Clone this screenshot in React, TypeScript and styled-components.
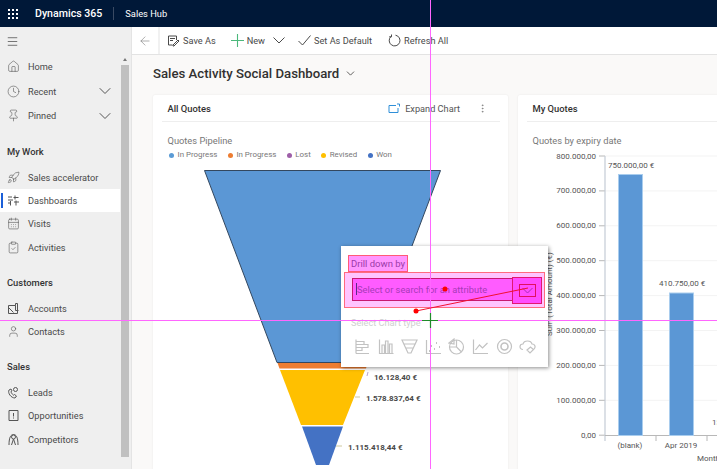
import React from "react";
import styled, { createGlobalStyle } from "styled-components";
import {
  ArrowLeft,
  ChevronDown,
  Clock,
  Home,
  Menu,
  MoreVertical,
  Pin,
  Rocket,
  CalendarDays,
  ClipboardCheck,
  User,
} from "lucide-react";

const GlobalStyle = createGlobalStyle`
  html, body {
    margin: 0;
    padding: 0;
    width: 717px;
    height: 469px;
    overflow: hidden;
    background: #faf9f8;
  }
  * { box-sizing: border-box; }
  body { font-family: Roboto, "Open Sans", sans-serif; }
`;

const Page = styled.div`
  position: relative;
  width: 717px;
  height: 469px;
  overflow: hidden;
  display: flex;
  flex-direction: column;
`;

const TopBar = styled.header`
  flex: 0 0 27px;
  background: #001838;
  color: #fff;
  display: flex;
  align-items: center;
  padding-left: 8px;
`;

const Waffle = styled.div`
  display: grid;
  grid-template-columns: repeat(3, 2px);
  grid-auto-rows: 2px;
  gap: 2px;
  margin-right: 17px;
  span {
    background: #fff;
  }
`;

const Product = styled.div`
  font-size: 10.6px;
  font-weight: 500;
  padding-right: 11px;
  border-right: 1px solid #3a4a63;
  line-height: 13px;
`;

const App_ = styled.div`
  font-size: 9.3px;
  padding-left: 11px;
`;

const Body = styled.div`
  flex: 1;
  display: flex;
  min-height: 0;
`;

const Side = styled.aside`
  flex: 0 0 132px;
  background: #efefef;
  display: flex;
  border-right: 1px solid #e4e4e4;
`;

const Nav = styled.nav`
  flex: 0 0 120px;
  padding-top: 5px;
  display: flex;
  flex-direction: column;
`;

const Burger = styled.div`
  height: 18px;
  padding-left: 6px;
  margin-bottom: 4.5px;
  display: flex;
  align-items: center;
  color: #333;
`;

const NavItem = styled.div<{ $active?: boolean; $tall?: boolean }>`
  position: relative;
  height: ${(p) => (p.$tall ? 24.5 : 23.2)}px;
  display: flex;
  align-items: center;
  gap: 8px;
  padding: 0 5px 0 7px;
  font-size: 9.2px;
  color: #4a4a4a;
  background: ${(p) => (p.$active ? "#fff" : "transparent")};
  svg {
    flex: none;
    color: #555;
  }
  ${(p) =>
    p.$active &&
    `&::before {
      content: "";
      position: absolute;
      left: 1px;
      top: 4px;
      bottom: 4px;
      width: 2px;
      background: #1b5fd8;
    }`}
`;

const NavLabel = styled.span`
  flex: 1;
`;

const NavGroup = styled.div`
  font-size: 9.4px;
  font-weight: 500;
  color: #333;
  padding-left: 7px;
  height: 26px;
  margin: 10.5px 0 1.5px;
  display: flex;
  align-items: center;
`;

const Scroll = styled.div`
  flex: 0 0 8px;
  margin-left: 1px;
  display: flex;
  flex-direction: column;
  align-items: center;
  padding-top: 31px;
`;

const ScrollUp = styled.div`
  width: 0;
  height: 0;
  border-left: 2.5px solid transparent;
  border-right: 2.5px solid transparent;
  border-bottom: 3px solid #777;
  margin-bottom: 4px;
`;

const ScrollThumb = styled.div`
  width: 8px;
  height: 392px;
  background: #c0c0c0;
`;

const Main = styled.main`
  flex: 1;
  min-width: 0;
  display: flex;
  flex-direction: column;
`;

const CommandRow = styled.div`
  flex: 0 0 28px;
  display: flex;
  gap: 2px;
  border-bottom: 1px solid #e3e3e3;
  background: #f1f1f1;
`;

const BackBox = styled.div`
  flex: 0 0 26px;
  background: #fff;
  display: flex;
  align-items: center;
  justify-content: center;
  color: #777;
`;

const Toolbar = styled.div`
  flex: 1;
  background: #fff;
  display: flex;
  align-items: center;
  padding-left: 7px;
  font-size: 9.2px;
  color: #4a4a4a;
`;

const Cmd = styled.div<{ $gap: number }>`
  display: flex;
  align-items: center;
  gap: 3px;
  margin-right: ${(p) => p.$gap}px;
  svg {
    flex: none;
  }
`;

const Content = styled.div`
  flex: 1;
  padding: 8px 0 0 21px;
  min-height: 0;
  overflow: hidden;
`;

const Heading = styled.h1`
  margin: 0 0 12px;
  height: 20px;
  font-size: 13.2px;
  font-weight: 500;
  color: #323130;
  display: flex;
  align-items: center;
  gap: 5px;
`;

const Cards = styled.div`
  display: flex;
  gap: 10px;
`;

const Card = styled.section<{ $width: number }>`
  flex: 0 0 ${(p) => p.$width}px;
  height: 380px;
  background: #fff;
  border-radius: 2px;
  box-shadow: 0 0 2px rgba(0, 0, 0, 0.08);
  overflow: hidden;
`;

const CardHead = styled.div`
  margin: 0 8px 0 9px;
  height: 27px;
  padding: 0 12px 0 5.5px;
  border-bottom: 1px solid #eee;
  display: flex;
  align-items: center;
  font-size: 9.4px;
  color: #323130;
`;

const CardTitle = styled.div`
  font-weight: 500;
  flex: 1;
`;

const Expand = styled.div`
  display: flex;
  align-items: center;
  gap: 5px;
  margin-right: 17px;
  font-size: 9.2px;
  color: #555;
`;

const ChartTitle = styled.div`
  font-size: 9.3px;
  color: #777;
  padding: 12px 0 0 14.5px;
  line-height: 13px;
`;

const Legend = styled.div`
  display: flex;
  gap: 10.5px;
  padding: 2px 0 0 16px;
  font-size: 7.9px;
  line-height: 12px;
  color: #777;
`;

const LegendItem = styled.div<{ $color: string }>`
  display: flex;
  align-items: center;
  gap: 3.5px;
  &::before {
    content: "";
    width: 5px;
    height: 5px;
    border-radius: 50%;
    background: ${(p) => p.$color};
  }
`;

const ChartSvg = styled.svg<{ $top: number }>`
  display: block;
  margin-top: ${(p) => p.$top}px;
  font-family: Roboto, sans-serif;
`;

const Popup = styled.div`
  position: absolute;
  left: 341px;
  top: 246px;
  width: 207px;
  height: 121px;
  background: #fff;
  box-shadow: 1px 1px 4px rgba(0, 0, 0, 0.45);
  padding: 9px 3px 0;
  display: flex;
  flex-direction: column;
`;

const DrillLabel = styled.div`
  align-self: flex-start;
  margin-left: 4px;
  width: 60px;
  height: 17px;
  padding-left: 2px;
  background: #ff96ff;
  border: 1px solid #ff5a78;
  font-size: 9.5px;
  line-height: 15px;
  color: #9a3aa8;
  white-space: nowrap;
`;

const FieldHalo = styled.div`
  position: relative;
  width: 201px;
  height: 36px;
  background: #ffc4ff;
  border: 1px solid #ff6a80;
  padding: 5px 0 0 7px;
`;

const Field = styled.div`
  width: 185px;
  height: 23px;
  background: #ff5cff;
  border: 1px solid #c81870;
  padding-left: 3px;
  font-size: 9.3px;
  line-height: 21px;
  color: #a83ab8;
  white-space: nowrap;
  overflow: hidden;
`;

const Caret = styled.span`
  display: inline-block;
  width: 1px;
  height: 12px;
  vertical-align: -2px;
  background: #5a2a8a;
`;

const DropHalo = styled.div`
  position: absolute;
  left: 167px;
  top: 4px;
  width: 30px;
  height: 27px;
  background: #ff4cff;
  border: 1px solid #e01870;
  display: flex;
  align-items: center;
  justify-content: center;
`;

const DropInner = styled.div`
  width: 17px;
  height: 13px;
  border: 1px solid #e01060;
  display: flex;
  align-items: center;
  justify-content: center;
  color: #a82cb8;
`;

const ChartTypeLabel = styled.div`
  font-size: 9.2px;
  color: #cfcfcf;
  padding: 8px 0 0 7px;
  line-height: 13px;
`;

const ChartTypes = styled.div`
  display: flex;
  gap: 6.6px;
  padding: 9px 0 0 10px;
  color: #c2c2c2;
`;

const Annotations = styled.svg`
  position: absolute;
  left: 0;
  top: 0;
  pointer-events: none;
`;

type IconProps = { children: React.ReactNode };

const Ico = ({ children }: IconProps) => (
  <svg width="13" height="13" viewBox="0 0 13 13" fill="none" stroke="currentColor" strokeWidth="1">
    {children}
  </svg>
);

const ChartIco = ({ children }: IconProps) => (
  <svg width="17" height="17" viewBox="0 0 17 17" fill="none" stroke="currentColor" strokeWidth="1.2">
    {children}
  </svg>
);

const small = { size: 13, strokeWidth: 1.1 };

const sections = [
  {
    title: "My Work",
    items: [
      { label: "Sales accelerator", icon: <Rocket {...small} /> },
      {
        label: "Dashboards",
        active: true,
        icon: (
          <Ico>
            <path d="M1 3h4M1 6h5M1 9h3M8 1.500v4M6.500 3.500h5M7 8h5M9 6.500v5M3.500 7v4.500" />
          </Ico>
        ),
      },
      { label: "Visits", icon: <CalendarDays {...small} /> },
      { label: "Activities", icon: <ClipboardCheck {...small} /> },
    ],
  },
  {
    title: "Customers",
    items: [
      {
        label: "Accounts",
        icon: (
          <Ico>
            <path d="M1.500 11.500v-8h7v-2h2v10zM1.500 5.500l5 5M8.500 3.500v5h3" />
          </Ico>
        ),
      },
      { label: "Contacts", icon: <User {...small} /> },
    ],
  },
  {
    title: "Sales",
    items: [
      {
        label: "Leads",
        icon: (
          <Ico>
            <circle cx="8.500" cy="3.500" r="2" />
            <path d="M2 4c-1.500 3 2 8 6 8l1.500-2-2-1.500-1 .7C5 8 4 6.500 4 5.500l1-.7L4 3z" />
          </Ico>
        ),
      },
      {
        label: "Opportunities",
        icon: (
          <Ico>
            <path d="M2 1.500h9v10H2zM6.500 4v3.500M6.500 8.500v1" />
          </Ico>
        ),
      },
      {
        label: "Competitors",
        icon: (
          <Ico>
            <circle cx="6.500" cy="4" r="2" />
            <path d="M2 12c0-8 2-10.500 4.500-10.500S11 4 11 12M4.500 12l2-6 2 6" />
          </Ico>
        ),
      },
    ],
  },
];

const legend = [
  { label: "In Progress", color: "#5b9bd5" },
  { label: "In Progress", color: "#ed7d31" },
  { label: "Lost", color: "#9e5fa8" },
  { label: "Revised", color: "#ffc000" },
  { label: "Won", color: "#4472c4" },
];

const yTicks = [
  "800.000,00",
  "700.000,00",
  "600.000,00",
  "500.000,00",
  "400.000,00",
  "300.000,00",
  "200.000,00",
  "100.000,00",
  "0,00",
];

const FunnelChart = () => (
  <ChartSvg $top={4} width="355" height="304" viewBox="153 165 355 304">
    <polygon points="204.500,170.500 440.500,170.500 368,362.500 277,362.500" fill="#5b97d5" stroke="#33475f" strokeWidth="1" />
    <polygon points="277.500,363 367.500,363 366,368.500 279.500,368.500" fill="#ed7d31" />
    <polygon points="280,370 365,370 343,425 301,425" fill="#ffc000" />
    <polygon points="302,426.500 343,426.500 329,465 316,465" fill="#4472c4" />
    <path d="M368 372l-1 4" stroke="#b9a3cc" fill="none" />
    <path d="M355 397h5M336 446h6" stroke="#cfc9a0" fill="none" />
    <g fontSize="8" fontWeight="700" fill="#484848">
      <text x="374" y="380">16.128,40 €</text>
      <text x="366" y="401">1.578.837,64 €</text>
      <text x="348" y="450">1.115.418,44 €</text>
    </g>
  </ChartSvg>
);

const BarChart = () => (
  <ChartSvg $top={3} width="260" height="320" viewBox="518 150 260 320">
    {yTicks.map((tick, i) => {
      const y = 156 + i * 34.9;
      return (
        <g key={tick}>
          {i < 8 && <line x1="605" x2="780" y1={y} y2={y} stroke="#f3f3f3" />}
          <line x1="599" x2="605" y1={y} y2={y} stroke="#b8b8b8" />
          <text x="596" y={y + 2.5} fontSize="8" fill="#555" textAnchor="end">
            {tick}
          </text>
        </g>
      );
    })}
    <line x1="605" x2="605" y1="156" y2="441" stroke="#c4cbd6" strokeWidth="1.200" />
    <line x1="605" x2="780" y1="435.500" y2="435.500" stroke="#b8b8b8" />
    <line x1="656" x2="656" y1="435" y2="441" stroke="#b8b8b8" />
    <line x1="707" x2="707" y1="435" y2="441" stroke="#b8b8b8" />
    <rect x="618.500" y="174.500" width="24" height="261" fill="#5b97d5" stroke="#a9cdee" />
    <rect x="669.500" y="293" width="24" height="142.500" fill="#5b97d5" stroke="#a9cdee" />
    <g fontSize="8" fill="#555">
      <text x="608" y="168">750.000,00 €</text>
      <text x="659" y="286">410.750,00 €</text>
      <text x="712" y="425">13</text>
      <text x="630" y="448" textAnchor="middle">(blank)</text>
      <text x="681" y="448" textAnchor="middle">Apr 2019</text>
      <text x="697" y="461">Month</text>
      <text transform="translate(552 336) rotate(-90)">Sum (Total Amount) (€)</text>
    </g>
  </ChartSvg>
);

export default function App() {
  return (
    <Page>
      <GlobalStyle />
      <TopBar>
        <Waffle>
          {Array.from({ length: 9 }, (_, i) => (
            <span key={i} />
          ))}
        </Waffle>
        <Product>Dynamics 365</Product>
        <App_>Sales Hub</App_>
      </TopBar>
      <Body>
        <Side>
          <Nav>
            <Burger>
              <Menu size={13} strokeWidth={1.2} />
            </Burger>
            <NavItem $tall>
              <Home {...small} />
              <NavLabel>Home</NavLabel>
            </NavItem>
            <NavItem $tall>
              <Clock {...small} />
              <NavLabel>Recent</NavLabel>
              <ChevronDown size={20} strokeWidth={1.2} />
            </NavItem>
            <NavItem $tall>
              <Pin {...small} />
              <NavLabel>Pinned</NavLabel>
              <ChevronDown size={20} strokeWidth={1.2} />
            </NavItem>
            {sections.map((section) => (
              <React.Fragment key={section.title}>
                <NavGroup>{section.title}</NavGroup>
                {section.items.map((item) => (
                  <NavItem key={item.label} $active={item.active}>
                    {item.icon}
                    <NavLabel>{item.label}</NavLabel>
                  </NavItem>
                ))}
              </React.Fragment>
            ))}
          </Nav>
          <Scroll>
            <ScrollUp />
            <ScrollThumb />
          </Scroll>
        </Side>
        <Main>
          <CommandRow>
            <BackBox>
              <ArrowLeft size={14} strokeWidth={1} />
            </BackBox>
            <Toolbar>
              <Cmd $gap={15}>
                <Ico>
                  <path d="M1.500 2h8v4M1.500 2v9h4M3 4.500h5M3 6.500h3M6 11l5-5 1 1-5 5H6z" />
                </Ico>
                Save As
              </Cmd>
              <Cmd $gap={8}>
                <svg width="13" height="13" viewBox="0 0 13 13" fill="none" stroke="#4cb87c" strokeWidth="1.100">
                  <path d="M6.500 0v13M0 6.500h13" />
                </svg>
                New
              </Cmd>
              <Cmd $gap={13}>
                <svg width="12" height="13" viewBox="0 0 12 13" fill="none" stroke="currentColor" strokeWidth="1">
                  <path d="M.5 3.500l5.500 5.500 5.500-5.500" />
                </svg>
              </Cmd>
              <Cmd $gap={16}>
                <Ico>
                  <path d="M.5 7l4 4 8-9.500" />
                </Ico>
                Set As Default
              </Cmd>
              <Cmd $gap={15}>
                <Ico>
                  <path d="M7.500 1.200A5.400 5.400 0 1 1 3 2.500M3.500 .5v2.300H1.200" />
                </Ico>
                Refresh All
              </Cmd>
            </Toolbar>
          </CommandRow>
          <Content>
            <Heading>
              Sales Activity Social Dashboard
              <ChevronDown size={13} strokeWidth={1.4} />
            </Heading>
            <Cards>
              <Card $width={355}>
                <CardHead>
                  <CardTitle>All Quotes</CardTitle>
                  <Expand>
                    <svg width="12" height="11" viewBox="0 0 12 11" fill="none" stroke="#2f8fd8" strokeWidth="1">
                      <path d="M8 2.500H1v7h9V5M9 1h2.500v2.500" />
                    </svg>
                    Expand Chart
                  </Expand>
                  <MoreVertical size={11} strokeWidth={1.2} color="#666" />
                </CardHead>
                <ChartTitle>Quotes Pipeline</ChartTitle>
                <Legend>
                  {legend.map((entry, i) => (
                    <LegendItem key={i} $color={entry.color}>
                      {entry.label}
                    </LegendItem>
                  ))}
                </Legend>
                <FunnelChart />
              </Card>
              <Card $width={260}>
                <CardHead>
                  <CardTitle>My Quotes</CardTitle>
                </CardHead>
                <ChartTitle>Quotes by expiry date</ChartTitle>
                <BarChart />
              </Card>
            </Cards>
          </Content>
        </Main>
      </Body>
      <Popup>
        <DrillLabel>Drill down by</DrillLabel>
        <FieldHalo>
          <Field>
            <Caret />
            Select or search for an attribute
          </Field>
          <DropHalo>
            <DropInner>
              <svg width="11" height="7" viewBox="0 0 11 7" fill="none" stroke="currentColor" strokeWidth="1">
                <path d="M.5 1l5 5 5-5" />
              </svg>
            </DropInner>
          </DropHalo>
        </FieldHalo>
        <ChartTypeLabel>Select Chart type</ChartTypeLabel>
        <ChartTypes>
          <ChartIco>
            <path d="M2 1.500v14M2 15.500h13M2 3.500h8v3H2M2 6.500h12v3H2M2 9.500h6v3H2" />
          </ChartIco>
          <ChartIco>
            <path d="M1.500 1.500v14h14M4 15V7h2.500v8M7.500 15V3H10v12M11.500 15V6H14v9" />
          </ChartIco>
          <ChartIco>
            <path d="M1 2h15L10 15H7zM3 6h11M5 10h7" />
          </ChartIco>
          <ChartIco>
            <path d="M1.500 2v13.500H16" />
            <path d="M4 13h1M6 8h1M9 11h1M11 5h1M14 9h1" strokeWidth="2" />
          </ChartIco>
          <ChartIco>
            <circle cx="8.500" cy="9" r="7" />
            <path d="M8.500 2v7l5 5M8.500 9H1.500M1 5l5-4v5z" />
          </ChartIco>
          <ChartIco>
            <path d="M1.500 1.500v14H16M3.500 12l4-5 3 3 5-5" />
          </ChartIco>
          <ChartIco>
            <circle cx="8.500" cy="8.500" r="7" />
            <circle cx="8.500" cy="8.500" r="3.500" strokeWidth="1.600" />
          </ChartIco>
          <ChartIco>
            <path d="M4 11.500C0 11.500 0 6 4 6c1-4 8-4 9 0 3 0 4 3 2 5M8 12l3.500-3 3 2.500-3.500 3.500z" />
          </ChartIco>
        </ChartTypes>
      </Popup>
      <Annotations width="717" height="469" viewBox="0 0 717 469">
        <line x1="430.500" x2="430.500" y1="0" y2="469" stroke="#ff66ff" />
        <line x1="0" x2="717" y1="320.500" y2="320.500" stroke="#ff66ff" />
        <line x1="416" y1="311" x2="528" y2="288" stroke="#f01030" />
        <circle cx="416" cy="311" r="2.500" fill="#f00" />
        <circle cx="445" cy="289" r="2.500" fill="#f00" />
        <path d="M422 320.500h16M430.500 313v15" stroke="#1f8a2a" strokeWidth="1.200" fill="none" />
      </Annotations>
    </Page>
  );
}
